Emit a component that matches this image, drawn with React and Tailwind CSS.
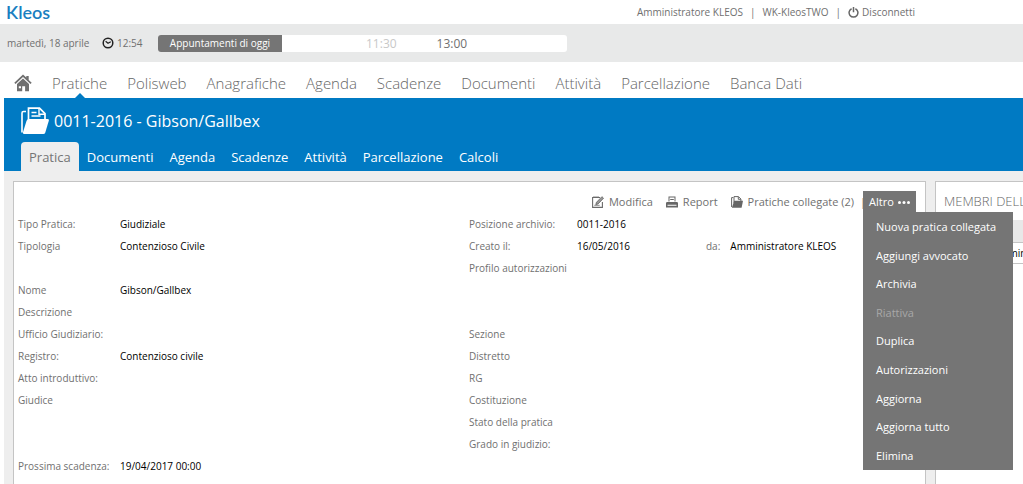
import React from "react";

const topNav = ["Polisweb", "Anagrafiche", "Agenda", "Scadenze", "Documenti", "Attività", "Parcellazione", "Banca Dati"];
const tabs = ["Documenti", "Agenda", "Scadenze", "Attività", "Parcellazione", "Calcoli"];
const menu = ["Nuova pratica collegata", "Aggiungi avvocato", "Archivia", "Riattiva", "Duplica", "Autorizzazioni", "Aggiorna", "Aggiorna tutto", "Elimina"];

const rows = [
  ["Tipo Pratica:", "Giudiziale", "Posizione archivio:", "0011-2016"],
  ["Tipologia", "Contenzioso Civile", "Creato il:", "16/05/2016", "Amministratore KLEOS"],
  ["", "", "Profilo autorizzazioni", ""],
  ["Nome", "Gibson/Gallbex", "", ""],
  ["Descrizione", "", "", ""],
  ["Ufficio Giudiziario:", "", "Sezione", ""],
  ["Registro:", "Contenzioso civile", "Distretto", ""],
  ["Atto introduttivo:", "", "RG", ""],
  ["Giudice", "", "Costituzione", ""],
  ["", "", "Stato della pratica", ""],
  ["", "", "Grado in giudizio:", ""],
  ["Prossima scadenza:", "19/04/2017 00:00", "", ""],
];

function HomeIcon() {
  return (
    <svg className="h-[18px] w-[18px] shrink-0" viewBox="0 0 18 18" fill="#6f6f6f" aria-hidden="true">
      <path d="M9 0.500 0.300 8.800l1.200 1.200L9 2.900l7.500 7.100 1.200-1.200-3-2.900V2h-2.400v1.600z" />
      <path fillRule="evenodd" d="M9 4.400 3 10v7.300h5.200v-5h2.900v5H15V10zM4.800 12.300h2.200v2H4.800z" />
    </svg>
  );
}

function ClockIcon() {
  return (
    <svg className="h-3 w-3" viewBox="0 0 12 12" fill="none" stroke="#222" strokeWidth="1.5" aria-hidden="true">
      <circle cx="6" cy="6" r="4.8" />
      <path d="M3.6 4.2 6 6.3l2.8-1.6" strokeWidth="1.2" />
    </svg>
  );
}

function PowerIcon() {
  return (
    <svg className="h-[11px] w-[11px]" viewBox="0 0 11 11" fill="none" stroke="#666" strokeWidth="1.5" aria-hidden="true">
      <path d="M3.6 1.7a4.4 4.4 0 1 0 3.8 0M5.5 0v5.2" />
    </svg>
  );
}

function CaseIcon() {
  return (
    <svg className="h-7 w-7 shrink-0" viewBox="0 0 28 28" fill="none" stroke="#fff" aria-hidden="true">
      <path d="M5 4.500H2.500Q1 4.500 1 6V25.500" strokeWidth="1.600" />
      <path d="M7.500 13V1.200H18.500L24 6.700V12" strokeWidth="1.700" />
      <path d="M18 1.500V7.200H24M10.500 5.500h5M10.500 9h9" strokeWidth="1.400" />
      <path d="M8 12H26.500Q28.300 12 27.800 13.700L24.300 25.500Q23.800 27 22.300 27H3.300Q1.500 27 2 25.300L5.600 13.700Q6.200 12 8 12Z" fill="#fff" stroke="none" />
    </svg>
  );
}

function EditIcon() {
  return (
    <svg className="h-3 w-3" viewBox="0 0 12 12" fill="none" stroke="#6b6b6b" aria-hidden="true">
      <path d="M8 1.500H0.600V11.400H10.400V6" strokeWidth="1.100" />
      <path d="M2 0v2M4 0v2M6 0v2M2.300 9.300h5.400" strokeWidth="0.800" />
      <path d="M3.800 8.600 4.500 6.300 9.900 0.700 11.500 2.200 6.100 7.900Z" fill="#999" strokeWidth="0.900" />
    </svg>
  );
}

function PrinterIcon() {
  return (
    <svg className="h-3 w-3" viewBox="0 0 12 12" fill="#666" aria-hidden="true">
      <path d="M2.500 0.500h7V5.500h-1V1.500h-5v4h-1z" />
      <path d="M4.200 3h3.600v1H4.200z" />
      <path fillRule="evenodd" d="M1.200 6h9.600Q12 6 12 7.200V11.500H0V7.200Q0 6 1.200 6zM1.500 8.700v1h9v-1z" />
    </svg>
  );
}

function FolderIcon() {
  return (
    <svg className="h-3 w-3" viewBox="0 0 12 12" fill="none" stroke="#666" aria-hidden="true">
      <path d="M2.300 1.600H.6V11M3 7V.6h4.500L9.900 3v2M7.300.8v2.500h2.500" />
      <path d="M3.200 4.700H12L10.600 11.700H.9z" fill="#666" stroke="none" />
    </svg>
  );
}

export default function App() {
  return (
    <div className="flex h-screen flex-col overflow-hidden bg-white font-['Open_Sans','Noto_Sans',sans-serif] text-[#707070]">
      <header className="flex h-6 shrink-0 items-center justify-between pr-[108px] pl-[6px]">
        <a href="#kleos" className="font-[Lato,sans-serif] text-[18px] leading-6 font-semibold text-[#1a7fc1]">Kleos</a>
        <div className="flex items-center text-[10px] leading-4">
          <span>Amministratore KLEOS</span>
          <span className="px-[7px]">|</span>
          <span>WK-KleosTWO</span>
          <span className="px-[7px]">|</span>
          <button className="flex items-center gap-[3px]"><PowerIcon />Disconnetti</button>
        </div>
      </header>

      <div className="flex h-[38px] shrink-0 items-center bg-[#e8e9e9] pl-[7px] text-[10px]">
        <span className="w-[95px]">martedì, 18 aprile</span>
        <span className="flex w-14 items-center gap-[3px]"><ClockIcon />12:54</span>
        <div className="flex h-[17px] w-[409px] overflow-hidden rounded-[3px] bg-white">
          <span className="w-[124px] bg-[#757575] text-center leading-[17px] text-white">Appuntamenti di oggi</span>
          <span className="pl-[84px] text-xs leading-[17px] text-[#c8c8c8]">11:30</span>
          <span className="pl-10 text-xs leading-[17px]">13:00</span>
        </div>
      </div>

      <nav className="flex h-9 shrink-0 items-stretch gap-5 pl-[14px] text-[15px] leading-[42px] font-[350] whitespace-nowrap text-[#666]">
        <a href="#home" aria-label="Home" className="flex w-[18px] items-center pt-[5px]"><HomeIcon /></a>
        <a href="#pratiche" className="relative">
          Pratiche
          <svg className="absolute bottom-0 left-1/2 h-[5px] w-[10px] -translate-x-1/2" viewBox="0 0 10 5" fill="#007ac3" aria-hidden="true"><path d="M5 0l5 5H0z" /></svg>
        </a>
        {topNav.map((t) => <a key={t} href={"#" + t}>{t}</a>)}
      </nav>

      <div className="ml-1 flex min-h-0 flex-1 flex-col bg-[#eeeeee]">
        <section className="flex h-[73px] shrink-0 flex-col justify-between bg-[#007ac3] pl-[17px] text-white">
          <h1 className="flex items-center gap-[5px] pt-[9px] text-[16px] leading-7"><CaseIcon />0011-2016 - Gibson/Gallbex</h1>
          <div className="flex gap-4 text-[13px] leading-7 whitespace-nowrap">
            <a href="#pratica" className="-mr-2 rounded-t-sm bg-[#eeeeee] px-2 pt-px text-[#757575]">Pratica</a>
            {tabs.map((t) => <a key={t} href={"#tab-" + t} className="pt-px">{t}</a>)}
          </div>
        </section>

        <main className="flex min-h-0 flex-1 gap-[9px] pt-[10px] pl-[9px]">
          <section className="flex-1 border border-b-0 border-[#c4c4c4] bg-white pt-[9px] pl-1">
            <div className="flex h-[22px] items-start justify-end pr-[9px] text-[11px] leading-[22px] whitespace-nowrap">
              <button className="mr-[13px] flex items-center gap-[5px]"><EditIcon />Modifica</button>
              <button className="mr-[13px] flex items-center gap-[5px]"><PrinterIcon />Report</button>
              <button className="mr-[6px] flex items-center gap-[5px]"><FolderIcon />Pratiche collegate (2)</button>
              <span className="w-[3px]">|</span>
              <div className="relative">
                <button className="flex h-[22px] w-[53px] items-center justify-center gap-1 bg-[#757575] text-white">
                  Altro
                  <svg className="h-[3px] w-3" viewBox="0 0 12 3" fill="#fff" aria-hidden="true"><circle cx="1.500" cy="1.500" r="1.500" /><circle cx="6" cy="1.500" r="1.500" /><circle cx="10.500" cy="1.500" r="1.500" /></svg>
                </button>
                <ul className="absolute top-[21px] left-0 z-10 grid h-[258px] w-[150px] auto-rows-fr bg-[#757575] pt-px">
                  {menu.map((m) => (
                    <li key={m}>
                      <button disabled={m === "Riattiva"} className="h-full w-full pl-[13px] text-left leading-7 text-white disabled:text-[#a8a8a8]">{m}</button>
                    </li>
                  ))}
                </ul>
              </div>
            </div>
            <table className="w-[840px] table-fixed text-left text-[10px] leading-[22px] whitespace-nowrap">
              <colgroup><col className="w-[102px]" /><col className="w-[349px]" /><col className="w-[108px]" /><col className="w-[129px]" /><col /></colgroup>
              <tbody>
                {rows.map(([a, b, c, d, e], i) => (
                  <tr key={i} className="h-[22px]">
                    <th className="font-normal">{a}</th>
                    <td className="text-black">{b}</td>
                    <th className="font-normal">{c}</th>
                    <td className="text-black">{d}</td>
                    <td className="text-black">{e && <><span className="mr-[10px] text-[#707070]">da:</span>{e}</>}</td>
                  </tr>
                ))}
              </tbody>
            </table>
          </section>
          <aside className="w-[88px] overflow-hidden border border-r-0 border-b-0 border-[#c4c4c4] bg-white whitespace-nowrap">
            <h2 className="h-[38px] pl-2 text-[13px] leading-[38px] font-[350] text-[#666]">MEMBRI DELLA</h2>
            <div className="h-[22px] bg-[#e8e8e8]" />
            <div className="h-[22px] border-y border-[#c4c4c4] pl-[57px] text-[10px] leading-5 text-black">Amministratore</div>
          </aside>
        </main>
      </div>
    </div>
  );
}
